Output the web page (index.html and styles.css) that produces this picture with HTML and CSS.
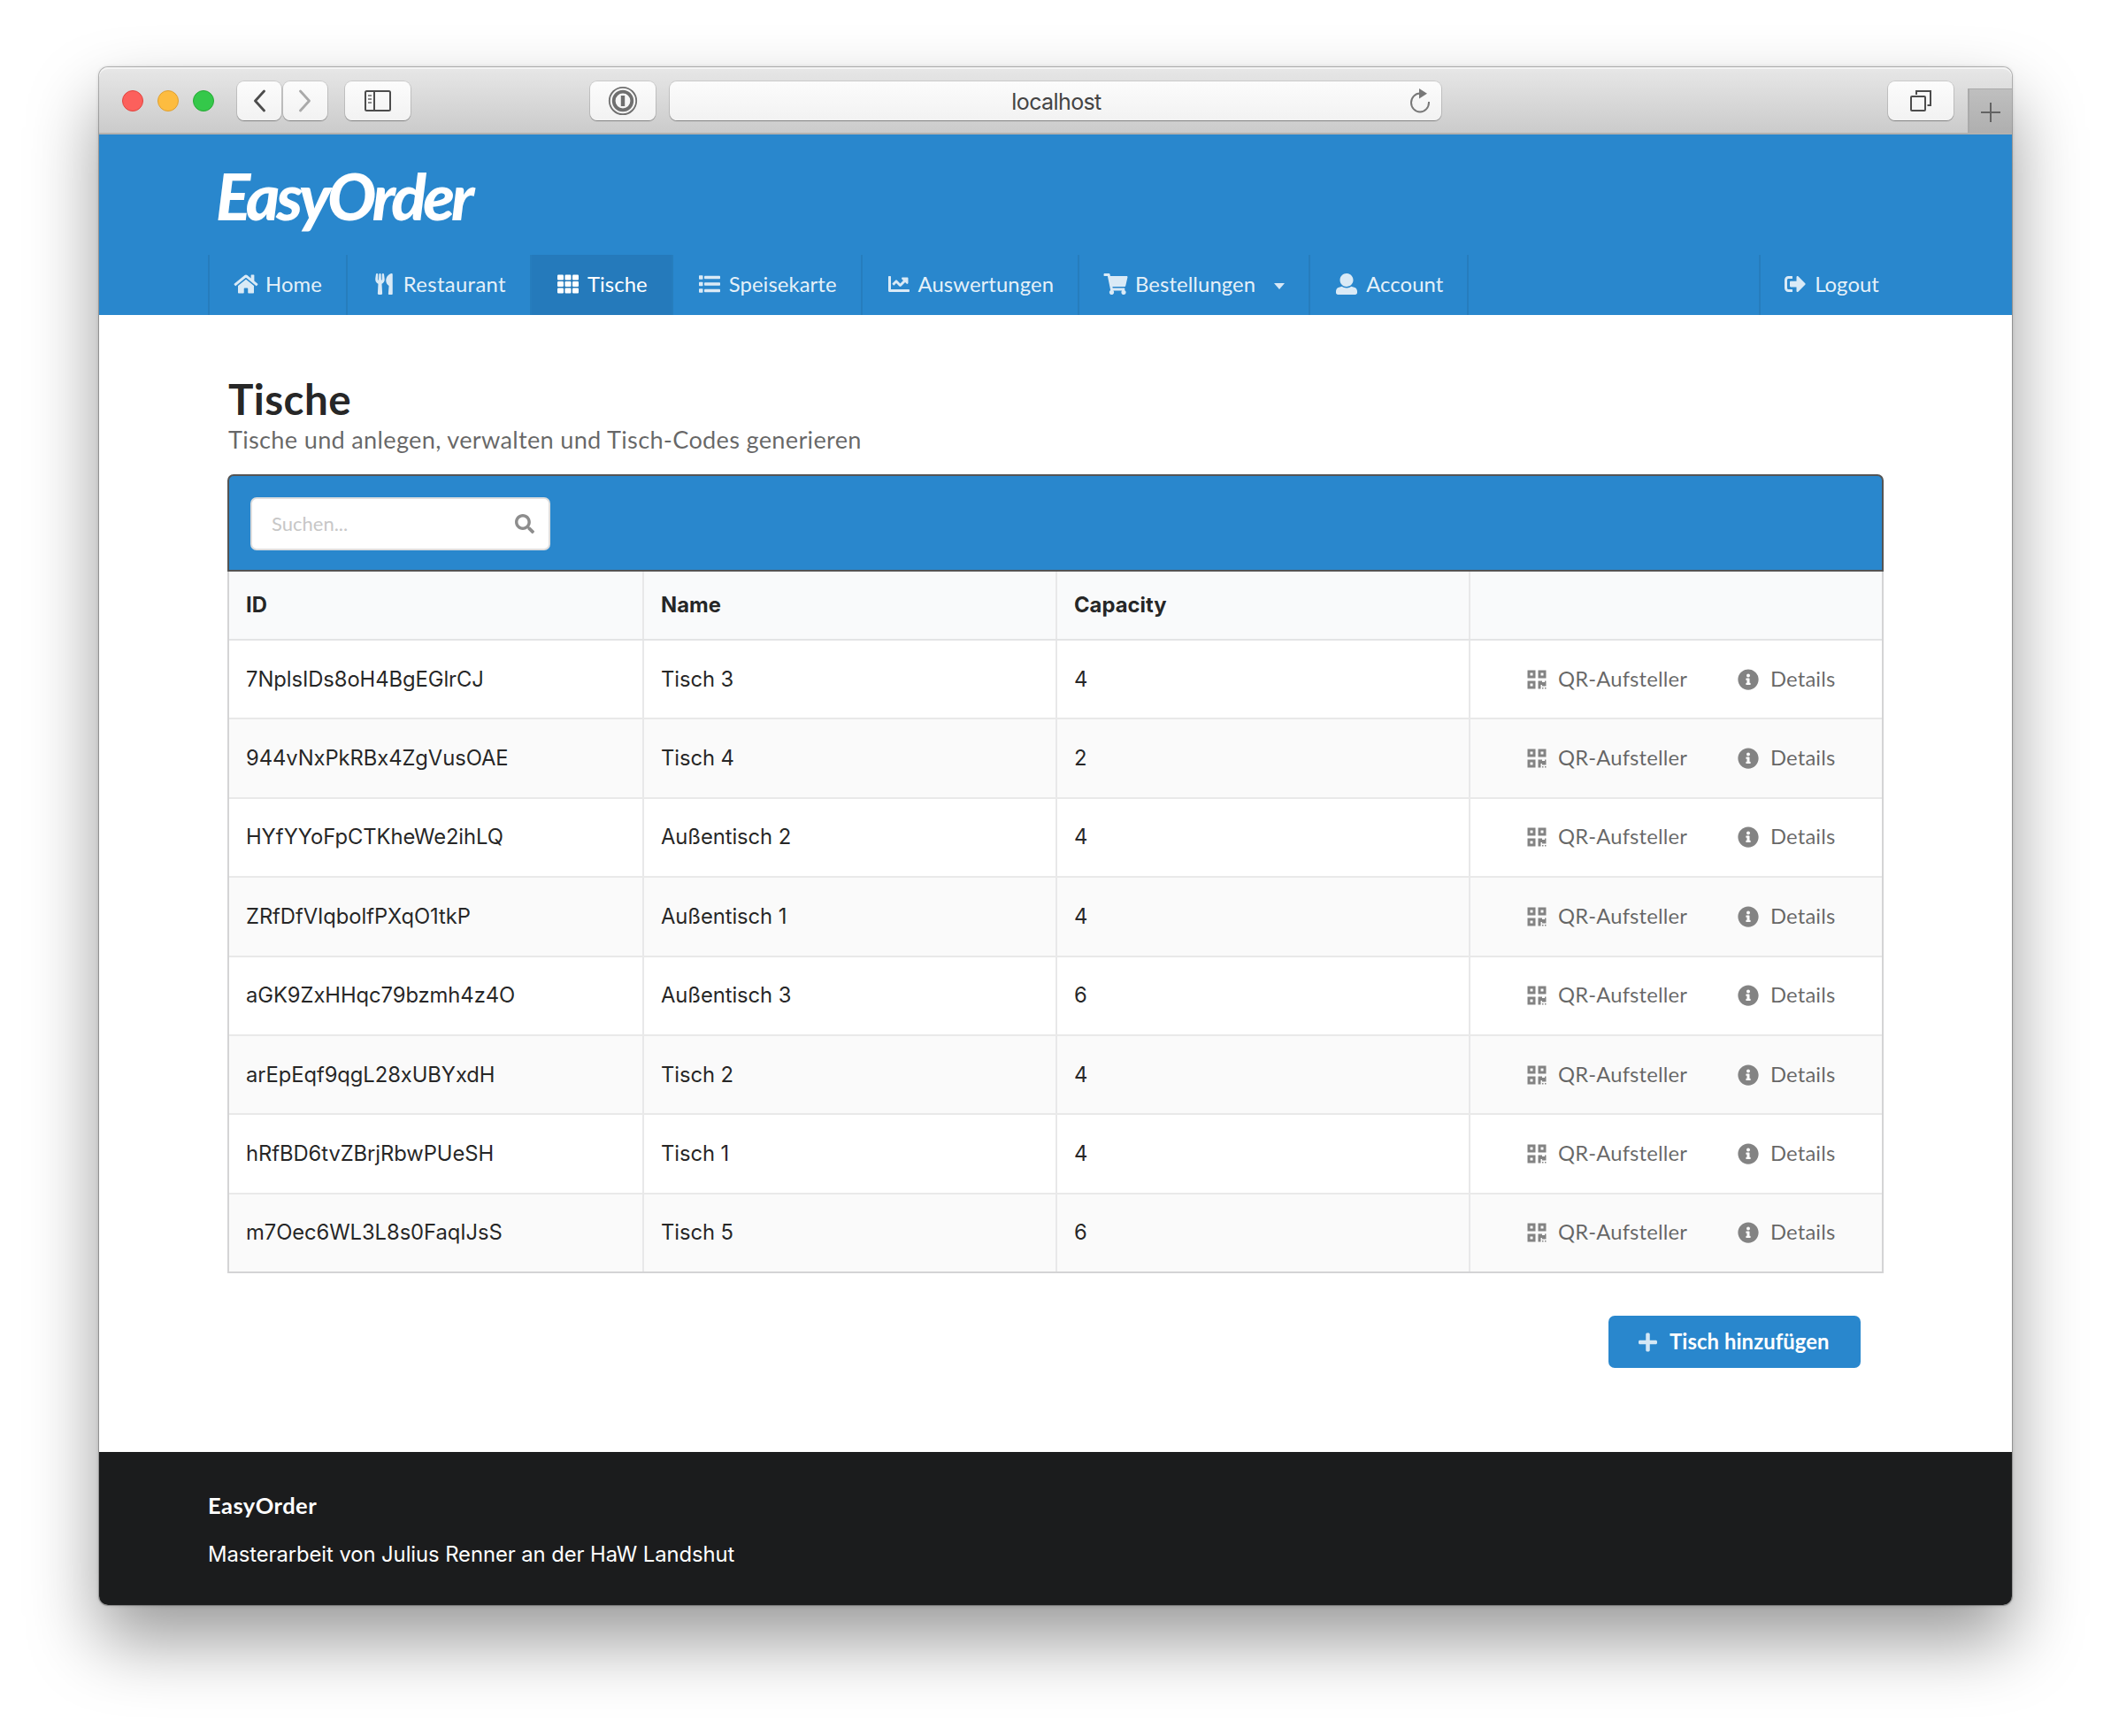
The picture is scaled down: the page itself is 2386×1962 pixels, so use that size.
FILE: index.html
```html
<!DOCTYPE html>
<html lang="de">
<head>
<meta charset="utf-8">
<title>EasyOrder – Tische</title>
<link rel="stylesheet" href="styles.css">
</head>
<body>
<svg class="sprite" aria-hidden="true">
  <symbol id="home" viewBox="0 0 576 512"><path d="M280.37 148.26L96 300.11V464a16 16 0 0 0 16 16l112.06-.29a16 16 0 0 0 15.92-16V368a16 16 0 0 1 16-16h64a16 16 0 0 1 16 16v95.64a16 16 0 0 0 16 16.05L464 480a16 16 0 0 0 16-16V300L295.67 148.26a12.19 12.19 0 0 0-15.3 0zM571.6 251.47L488 182.56V44.05a12 12 0 0 0-12-12h-56a12 12 0 0 0-12 12v72.61L318.47 43a48 48 0 0 0-61 0L4.34 251.47a12 12 0 0 0-1.6 16.9l25.5 31A12 12 0 0 0 45.15 301l235.22-193.74a12.19 12.19 0 0 1 15.3 0L530.9 301a12 12 0 0 0 16.9-1.6l25.5-31a12 12 0 0 0-1.7-16.93z"/></symbol>
  <symbol id="utensils" viewBox="0 0 416 512"><path d="M207.9 15.2c.8 4.7 16.1 94.5 16.1 128.8 0 52.3-27.8 89.6-68.9 104.6L168 486.7c.7 13.7-10.2 25.3-24 25.3H80c-13.7 0-24.7-11.5-24-25.3l12.9-238.1C27.7 233.6 0 196.2 0 144 0 109.6 15.3 19.9 16.1 15.2 19.3-5.1 61.4-5.4 64 16.3v141.2c1.3 3.4 15.1 3.2 16 0 1.4-25.3 7.9-139.2 8-141.8 3.3-20.8 44.7-20.8 47.9 0 .2 2.7 6.6 116.5 8 141.8.9 3.2 14.8 3.4 16 0V16.3c2.6-21.6 44.8-21.4 48-1.1zm119.2 285.7l-15 185.1c-1.2 14 9.9 26 23.9 26h56c13.3 0 24-10.7 24-24V24c0-13.2-10.7-24-24-24-82.5 0-221.4 178.5-64.9 300.9z"/></symbol>
  <symbol id="grid" viewBox="0 0 512 512"><rect x="0" y="32" width="149" height="128" rx="24"/><rect x="181" y="32" width="150" height="128" rx="24"/><rect x="363" y="32" width="149" height="128" rx="24"/><rect x="0" y="192" width="149" height="128" rx="24"/><rect x="181" y="192" width="150" height="128" rx="24"/><rect x="363" y="192" width="149" height="128" rx="24"/><rect x="0" y="352" width="149" height="128" rx="24"/><rect x="181" y="352" width="150" height="128" rx="24"/><rect x="363" y="352" width="149" height="128" rx="24"/></symbol>
  <symbol id="list" viewBox="0 0 512 512"><rect x="0" y="48" width="96" height="96" rx="16"/><rect x="0" y="208" width="96" height="96" rx="16"/><rect x="0" y="368" width="96" height="96" rx="16"/><rect x="128" y="60" width="384" height="72" rx="16"/><rect x="128" y="220" width="384" height="72" rx="16"/><rect x="128" y="380" width="384" height="72" rx="16"/></symbol>
  <symbol id="chart" viewBox="0 0 512 512"><path d="M496 384H64V80c0-8.84-7.16-16-16-16H16C7.16 64 0 71.16 0 80v336c0 17.67 14.33 32 32 32h464c8.84 0 16-7.16 16-16v-32c0-8.84-7.16-16-16-16zM464 96H345.94c-21.38 0-32.09 25.85-16.97 40.97l32.4 32.4L288 242.75l-73.37-73.37c-12.5-12.5-32.76-12.5-45.25 0l-68.69 68.69c-6.25 6.25-6.25 16.38 0 22.63l22.62 22.62c6.25 6.25 16.38 6.25 22.63 0L192 237.25l73.37 73.37c12.5 12.5 32.76 12.5 45.25 0l96-96 32.4 32.4c15.12 15.12 40.97 4.41 40.97-16.97V112c.01-8.84-7.15-16-15.99-16z"/></symbol>
  <symbol id="cart" viewBox="0 0 576 512"><path d="M528.12 301.319l47.273-208C578.806 78.301 567.391 64 551.99 64H159.208l-9.166-44.81C147.758 8.021 137.93 0 126.529 0H24C10.745 0 0 10.745 0 24v16c0 13.255 10.745 24 24 24h69.883l70.248 343.435C147.325 417.1 136 435.222 136 456c0 30.928 25.072 56 56 56s56-25.072 56-56c0-15.674-6.447-29.835-16.824-40h209.647C430.447 426.165 424 440.326 424 456c0 30.928 25.072 56 56 56s56-25.072 56-56c0-22.172-12.888-41.332-31.579-50.405l5.517-24.276c3.413-15.018-8.002-29.319-23.403-29.319H218.117l-6.545-32h293.145c11.206 0 20.92-7.754 23.403-18.681z"/></symbol>
  <symbol id="user" viewBox="0 0 512 512"><path d="M256 0c88.366 0 160 71.634 160 160s-71.634 160-160 160S96 248.366 96 160 167.634 0 256 0zm183.283 333.821l-71.313-17.828c-74.923 53.89-165.738 41.864-223.94 0l-71.313 17.828C29.981 344.505 0 382.903 0 426.955V464c0 26.51 21.49 48 48 48h416c26.51 0 48-21.49 48-48v-37.045c0-44.052-29.981-82.45-72.717-93.134z"/></symbol>
  <symbol id="logout" viewBox="0 0 512 512"><path d="M497 273L329 441c-15 15-41 4.5-41-17v-96H152c-13.3 0-24-10.7-24-24v-96c0-13.3 10.7-24 24-24h136V88c0-21.4 25.9-32 41-17l168 168c9.3 9.4 9.3 24.6 0 34zM192 436v-40c0-6.6-5.4-12-12-12H96c-17.7 0-32-14.3-32-32V160c0-17.7 14.3-32 32-32h84c6.6 0 12-5.4 12-12V76c0-6.6-5.4-12-12-12H96c-53 0-96 43-96 96v192c0 53 43 96 96 96h84c6.6 0 12-5.4 12-12z"/></symbol>
  <symbol id="search" viewBox="0 0 512 512"><path d="M505 442.7L405.3 343c-4.5-4.5-10.6-7-17-7H372c27.6-35.3 44-79.7 44-128C416 93.1 322.9 0 208 0S0 93.1 0 208s93.1 208 208 208c48.3 0 92.7-16.4 128-44v16.3c0 6.4 2.5 12.5 7 17l99.7 99.7c9.4 9.4 24.6 9.4 33.9 0l28.3-28.3c9.4-9.4 9.4-24.6.1-34zM208 336c-70.7 0-128-57.2-128-128 0-70.7 57.2-128 128-128 70.7 0 128 57.2 128 128 0 70.7-57.2 128-128 128z"/></symbol>
  <symbol id="qr" viewBox="0 0 448 512"><path fill-rule="evenodd" d="M0 224h192V32H0v192zM64 96h64v64H64V96zm192-64v192h192V32H256zm128 128h-64V96h64v64zM0 480h192V288H0v192zm64-128h64v64H64v-64zm352-64h32v128h-96v-32h-32v96h-64V288h96v32h64v-32zm0 160h32v32h-32v-32zm-64 0h32v32h-32v-32z"/></symbol>
  <symbol id="info" viewBox="0 0 512 512"><path fill-rule="evenodd" d="M256 8C119.043 8 8 119.083 8 256c0 136.997 111.043 248 248 248s248-111.003 248-248C504 119.083 392.957 8 256 8zm0 110c23.196 0 42 18.804 42 42s-18.804 42-42 42-42-18.804-42-42 18.804-42 42-42zm56 254c0 6.627-5.373 12-12 12h-88c-6.627 0-12-5.373-12-12v-24c0-6.627 5.373-12 12-12h12v-64h-12c-6.627 0-12-5.373-12-12v-24c0-6.627 5.373-12 12-12h64c6.627 0 12 5.373 12 12v100h12c6.627 0 12 5.373 12 12v24z"/></symbol>
  <symbol id="plus" viewBox="0 0 448 512"><path d="M416 208H272V64c0-17.67-14.33-32-32-32h-32c-17.67 0-32 14.33-32 32v144H32c-17.67 0-32 14.33-32 32v32c0 17.67 14.33 32 32 32h144v144c0 17.67 14.33 32 32 32h32c17.67 0 32-14.33 32-32V304h144c17.67 0 32-14.33 32-32v-32c0-17.67-14.33-32-32-32z"/></symbol>
</svg>

<div class="window">
  <div class="toolbar">
    <div class="lights"><i class="light red"></i><i class="light yellow"></i><i class="light green"></i></div>
    <div class="tool-btn back"><svg width="14" height="26" viewBox="0 0 14 26"><path d="M12.500 2L2.500 13l10 11" fill="none" stroke="#4c4c4c" stroke-width="2.800" stroke-linecap="round" stroke-linejoin="round"/></svg></div>
    <div class="tool-btn forward"><svg width="14" height="26" viewBox="0 0 14 26"><path d="M1.500 2l10 11-10 11" fill="none" stroke="#a9a9a9" stroke-width="2.800" stroke-linecap="round" stroke-linejoin="round"/></svg></div>
    <div class="tool-btn sidebar"><svg width="32" height="26" viewBox="0 0 32 26"><g fill="none" stroke="#4c4c4c" stroke-width="2"><rect x="2" y="2" width="28" height="22" rx="1.500"/><path d="M12 2v22"/></g><path d="M5 7h4M5 11h4M5 15h4" stroke="#8a8a8a" stroke-width="2"/></svg></div>
    <div class="tool-btn password"><svg width="34" height="34" viewBox="0 0 34 34"><circle cx="17" cy="17" r="15.200" fill="none" stroke="#6f6f6f" stroke-width="1.800"/><circle cx="17" cy="17" r="10.300" fill="none" stroke="#6f6f6f" stroke-width="3.800"/><rect x="14.800" y="11" width="4.400" height="12" fill="#6f6f6f"/></svg></div>
    <div class="address"><span>localhost</span><svg class="reload" width="24" height="28" viewBox="0 0 24 28"><path d="M13 5.500h-1A10 10.500 0 1 0 22 16v-1" fill="none" stroke="#787878" stroke-width="2"/><path d="M11 0l9 5.700-9 5.800z" fill="#787878"/></svg></div>
    <div class="tool-btn tabs"><svg width="26" height="26" viewBox="0 0 26 26"><g fill="none" stroke="#4c4c4c" stroke-width="2"><rect x="2" y="8" width="16" height="16" rx="1"/><path d="M8 6V2h16v16h-3.500"/></g></svg></div>
    <div class="new-tab"><svg width="22" height="22" viewBox="0 0 22 22"><path d="M11 0v22M0 11h22" stroke="#636363" stroke-width="2"/></svg></div>
  </div>

  <header class="header">
    <div class="brand">EasyOrder</div>
    <nav class="menu">
      <a class="item"><svg class="icon"><use href="#home"/></svg>Home</a>
      <a class="item wide"><svg class="icon"><use href="#utensils"/></svg>Restaurant</a>
      <a class="item active"><svg class="icon"><use href="#grid"/></svg>Tische</a>
      <a class="item"><svg class="icon"><use href="#list"/></svg>Speisekarte</a>
      <a class="item"><svg class="icon"><use href="#chart"/></svg>Auswertungen</a>
      <a class="item"><svg class="icon"><use href="#cart"/></svg>Bestellungen<i class="caret"></i></a>
      <a class="item"><svg class="icon"><use href="#user"/></svg>Account</a>
      <a class="item logout"><svg class="icon"><use href="#logout"/></svg>Logout</a>
    </nav>
  </header>

  <main class="content">
    <h1 class="title">Tische</h1>
    <p class="subtitle">Tische und anlegen, verwalten und Tisch-Codes generieren</p>
    <div class="table-bar">
      <div class="search"><span>Suchen...</span><svg class="search-icon"><use href="#search"/></svg></div>
    </div>
    <div class="table">
      <div class="row head"><div class="cell">ID</div><div class="cell">Name</div><div class="cell">Capacity</div><div class="cell"></div></div>
      <div class="row"><div class="cell">7NplsIDs8oH4BgEGlrCJ</div><div class="cell">Tisch 3</div><div class="cell">4</div><div class="cell actions"><a class="qr"><svg><use href="#qr"/></svg>QR-Aufsteller</a><a class="info"><svg><use href="#info"/></svg>Details</a></div></div>
      <div class="row"><div class="cell">944vNxPkRBx4ZgVusOAE</div><div class="cell">Tisch 4</div><div class="cell">2</div><div class="cell actions"><a class="qr"><svg><use href="#qr"/></svg>QR-Aufsteller</a><a class="info"><svg><use href="#info"/></svg>Details</a></div></div>
      <div class="row"><div class="cell">HYfYYoFpCTKheWe2ihLQ</div><div class="cell">Außentisch 2</div><div class="cell">4</div><div class="cell actions"><a class="qr"><svg><use href="#qr"/></svg>QR-Aufsteller</a><a class="info"><svg><use href="#info"/></svg>Details</a></div></div>
      <div class="row"><div class="cell">ZRfDfVIqbolfPXqO1tkP</div><div class="cell">Außentisch 1</div><div class="cell">4</div><div class="cell actions"><a class="qr"><svg><use href="#qr"/></svg>QR-Aufsteller</a><a class="info"><svg><use href="#info"/></svg>Details</a></div></div>
      <div class="row"><div class="cell">aGK9ZxHHqc79bzmh4z4O</div><div class="cell">Außentisch 3</div><div class="cell">6</div><div class="cell actions"><a class="qr"><svg><use href="#qr"/></svg>QR-Aufsteller</a><a class="info"><svg><use href="#info"/></svg>Details</a></div></div>
      <div class="row"><div class="cell">arEpEqf9qgL28xUBYxdH</div><div class="cell">Tisch 2</div><div class="cell">4</div><div class="cell actions"><a class="qr"><svg><use href="#qr"/></svg>QR-Aufsteller</a><a class="info"><svg><use href="#info"/></svg>Details</a></div></div>
      <div class="row"><div class="cell">hRfBD6tvZBrjRbwPUeSH</div><div class="cell">Tisch 1</div><div class="cell">4</div><div class="cell actions"><a class="qr"><svg><use href="#qr"/></svg>QR-Aufsteller</a><a class="info"><svg><use href="#info"/></svg>Details</a></div></div>
      <div class="row"><div class="cell">m7Oec6WL3L8s0FaqIJsS</div><div class="cell">Tisch 5</div><div class="cell">6</div><div class="cell actions"><a class="qr"><svg><use href="#qr"/></svg>QR-Aufsteller</a><a class="info"><svg><use href="#info"/></svg>Details</a></div></div>
    </div>
    <a class="add"><svg><use href="#plus"/></svg>Tisch hinzufügen</a>
  </main>

  <footer class="footer">
    <h4>EasyOrder</h4>
    <p>Masterarbeit von Julius Renner an der HaW Landshut</p>
  </footer>
</div>
</body>
</html>
```
FILE: styles.css
```css
* { box-sizing: border-box; }
html { font-size: 23.8px; }
body { margin: 0; padding: 76px 112px 148px; background: #fff; font: 1rem/1.4285 Lato, sans-serif; color: rgba(0,0,0,.87); overflow: hidden; }
svg { display: block; flex: none; fill: currentColor; }
.sprite { position: absolute; width: 0; height: 0; }

.window { width: 2162px; height: 1738px; display: flex; flex-direction: column; border-radius: 10px; background: #fff; box-shadow: 0 0 0 1px rgba(0,0,0,.22), 0 0 4px rgba(0,0,0,.2), 0 40px 80px rgba(0,0,0,.4); }

.toolbar { height: 76px; display: flex; align-items: flex-start; padding: 16px 0 0 26px; border-radius: 10px 10px 0 0; background: linear-gradient(#e7e7e7, #cbcbcb); border-bottom: 2px solid #b3b1af; box-shadow: inset 0 2px 0 #f4f4f4; }
.lights { display: flex; gap: 16px; margin: 10px 26px 0 0; }
.light { width: 24px; height: 24px; border-radius: 50%; }
.red { background: #fc605c; border: 1px solid #e2453f; }
.yellow { background: #fdbc40; border: 1px solid #dfa032; }
.green { background: #34c84a; border: 1px solid #27aa35; }
.tool-btn, .address { height: 44px; border-radius: 8px; background: linear-gradient(#fcfcfc, #f2f2f2); box-shadow: 0 0 0 1px rgba(0,0,0,.1), 0 1px 1px rgba(0,0,0,.3); display: flex; align-items: center; justify-content: center; }
.back { width: 50px; margin-right: 2px; }
.forward { width: 50px; margin-right: 20px; }
.sidebar { width: 74px; margin-right: 203px; }
.password { width: 74px; margin-right: 16px; }
.address { width: 872px; margin-right: 505px; position: relative; font: 25px/44px Inter, sans-serif; letter-spacing: -.6px; color: #444; padding: 2px 0 0 2px; }
.reload { position: absolute; right: 12px; top: 8px; }
.tabs { width: 74px; margin-right: 16px; }
.new-tab { width: 50px; height: 50px; margin-top: 8px; background: linear-gradient(#bfbfbf, #afafaf); border: 2px solid #aaa; border-width: 1px 0 0 2px; display: flex; align-items: center; justify-content: center; padding-top: 3px; }

.header { height: 204px; background: #2987cd; padding: 0 123px; display: flex; flex-direction: column; }
.brand { height: 136px; padding-left: 9px; color: #fff; font: italic 900 73px/138px Lato, cursive; letter-spacing: -3.900px; }
.menu { height: 68px; display: flex; border-left: 2px solid #267dbd; color: rgba(255,255,255,.9); letter-spacing: .1px; }
.item { display: flex; align-items: center; padding: 0 27px; border-right: 2px solid #267dbd; white-space: nowrap; }
.wide { letter-spacing: .350px; }
.icon { width: 28px; height: 24px; margin: -2px 8px 0 0; opacity: .92; }
.active { background: #257abb; color: #fff; }
.active .icon { opacity: 1; }
.caret { border: 6.500px solid transparent; border-top: 7px solid #d7e8f6; border-bottom: 0; margin: 3px 0 0 21px; }
.logout { margin-left: auto; padding-left: 25px; border-right: 0; border-left: 2px solid #267dbd; }

.content { height: 1285px; padding: 0 145px; display: flex; flex-direction: column; }
.title { margin: 64px 0 0 1px; font-size: 47.600px; line-height: 61px; font-weight: 700; letter-spacing: .400px; }
.subtitle { margin: 0 0 0 1px; font-size: 27.200px; line-height: 32px; color: rgba(0,0,0,.6); letter-spacing: .280px; }
.table-bar { margin-top: 23px; height: 110px; border: 2px solid #545454; border-radius: 7px 7px 0 0; background: #2987cd; padding: 24px; }
.search { width: 339px; height: 60px; border: 2px solid #dedede; border-radius: 7px; background: #fff; display: flex; align-items: center; justify-content: space-between; padding: 0 16px 0 22px; color: #c7c7c7; font-size: 22px; }
.search-icon { width: 22px; height: 22px; color: #8d8d8d; }
.table { border: 2px solid #d4d4d5; border-top: 0; font-family: Inter, sans-serif; letter-spacing: -.080px; }
.row { display: grid; grid-template-columns: 469px 467px 467px 1fr; height: 89.400px; border-bottom: 2px solid #e9e9e9; }
.row:last-child { border-bottom: 0; height: 87.400px; }
.row:nth-child(odd):not(.head) { background: #fafafa; }
.head { height: 78px; background: #f9fafb; font-weight: 700; letter-spacing: 0; border-bottom-color: #e3e4e5; }
.cell { display: flex; align-items: center; padding-left: 19px; border-right: 2px solid #e8e8e9; }
.cell:last-child { border-right: 0; }
.actions { padding-left: 64px; font-family: Lato, sans-serif; color: rgba(0,0,0,.6); letter-spacing: .150px; }
.actions a { display: flex; align-items: center; }
.actions svg { color: #838383; }
.qr svg { width: 22px; height: 24px; margin-right: 13px; }
.info { margin-left: 57px; }
.info svg { width: 24px; height: 24px; margin-right: 13px; }
.add { align-self: flex-end; margin: 48px 26px 0 0; width: 285px; height: 59px; border-radius: 7px; background: #2987cd; color: #fff; font-weight: 700; display: flex; align-items: center; padding-left: 34px; white-space: nowrap; letter-spacing: .100px; }
.add svg { width: 21px; height: 24px; margin-right: 14px; opacity: .8; }

.footer { height: 173px; background: #1b1c1d; border-radius: 0 0 10px 10px; padding: 43px 123px 0; color: #fff; }
.footer h4 { margin: 0; font-size: 25.500px; line-height: 34px; letter-spacing: .450px; }
.footer p { margin: 22px 0 0; font: 23.800px/34px Inter, sans-serif; letter-spacing: -.060px; }
```
